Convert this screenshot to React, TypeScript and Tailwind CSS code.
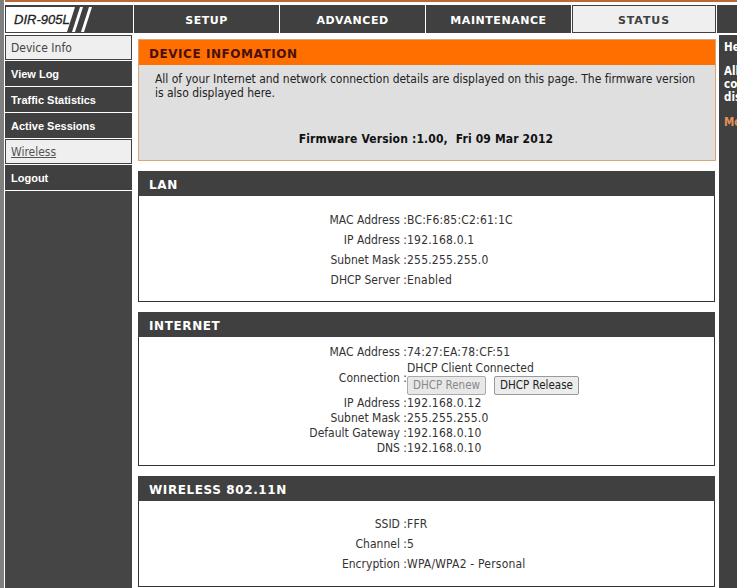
const bodyFont = "font-['DejaVu_Sans_Condensed','DejaVu_Sans',sans-serif]";

const navItems = ["SETUP", "ADVANCED", "MAINTENANCE"];

const sideItems = [
  { label: "Device Info", kind: "light" },
  { label: "View Log", kind: "dark" },
  { label: "Traffic Statistics", kind: "dark" },
  { label: "Active Sessions", kind: "dark" },
  { label: "Wireless", kind: "current" },
  { label: "Logout", kind: "dark" },
];

function Logo() {
  return (
    <div className="relative w-[128px] h-full shrink-0 overflow-hidden bg-[#404040]">
      <svg width="128" height="28" viewBox="0 0 128 28" className="block">
        <polygon points="1,2 70,2 62,27 1,27" fill="#ffffff" />
        <polygon points="75,2 78,2 70,27 67,27" fill="#ffffff" />
        <polygon points="84,2 87,2 79,27 76,27" fill="#ffffff" />
      </svg>
      <span className="absolute left-[9px] top-[6px] font-['Liberation_Sans',sans-serif] italic text-[13px] leading-[17px] [-webkit-text-stroke:0.3px_#222] text-[#222]">
        DIR-905L
      </span>
    </div>
  );
}

function Row({ label, children }: { label: string; children: React.ReactNode }) {
  return (
    <div className="flex items-center">
      <div className="w-[268px] text-right shrink-0 whitespace-nowrap">{label} :</div>
      <div className="whitespace-nowrap tracking-[0.2px]">{children}</div>
    </div>
  );
}

function Section({ title, className, children }: { title: string; className: string; children: React.ReactNode }) {
  return (
    <section className={`flex flex-col w-[577px] shrink-0 border-x border-b border-[#333] ${className}`}>
      <h2 className="h-[25px] -mx-px shrink-0 bg-[#404040] pl-[11px] font-['DejaVu_Sans',sans-serif] font-bold text-[12px] leading-[29px] tracking-[0.6px] text-white">
        {title}
      </h2>
      {children}
    </section>
  );
}

export default function App() {
  return (
    <div className={`h-[588px] w-[737px] overflow-hidden bg-white flex text-[12px] text-[#333] ${bodyFont}`}>
      <div className="w-1 shrink-0 bg-[#808080]" />
      <div className="ml-px flex-1 min-w-0 flex flex-col">
        <div className="h-[2px] shrink-0 bg-[#b9683a]" />

        {/* top nav */}
        <div className="mt-[3px] h-[28px] shrink-0 flex bg-[#404040]">
          <Logo />
          <div className="w-px bg-white" />
          {navItems.map((label) => (
            <div key={label} className="flex">
              <div className="w-[145px] text-center font-['DejaVu_Sans',sans-serif] font-bold text-[11px] leading-[31px] tracking-[0.55px] text-white">
                {label}
              </div>
              <div className="w-px bg-white" />
            </div>
          ))}
          <div className="w-[144px] border border-[#404040] bg-[#efefef] text-center font-['DejaVu_Sans',sans-serif] font-bold text-[11px] leading-[29px] tracking-[0.9px] text-[#404040]">
            STATUS
          </div>
          <div className="w-px bg-white" />
        </div>

        <div className="mt-[2px] flex-1 min-h-0 flex">
          {/* side menu */}
          <nav className="w-[127px] shrink-0 flex flex-col gap-px bg-white">
            {sideItems.map((item) => (
              <div
                key={item.label}
                className={
                  item.kind === "dark"
                    ? "h-[25px] bg-[#404040] pl-[6px] leading-[26px] font-['Liberation_Sans',sans-serif] font-bold text-[11px] text-white"
                    : item.kind === "current"
                      ? "h-[25px] bg-[#efefef] border border-[#404040] pl-[5px] leading-[25px] text-[#555] underline"
                      : "h-[25px] bg-[#efefef] border border-[#404040] pl-[5px] leading-[25px] text-[#444]"
                }
              >
                {item.label}
              </div>
            ))}
            <div className="flex-1 bg-[#454545]" />
          </nav>

          {/* content */}
          <main className="ml-[6px] w-[578px] shrink-0 flex flex-col pt-1">
            <section className="h-[122px] w-[578px] shrink-0 border border-[#d6a77f] bg-[#dfdfdf] flex flex-col">
              <h1 className="h-[25px] shrink-0 bg-[#ff6f00] pl-[10px] font-['DejaVu_Sans',sans-serif] font-bold text-[12px] leading-[28px] tracking-[0.55px] text-[#4a0f0a]">
                DEVICE INFOMATION
              </h1>
              <p className="mt-[7px] ml-4 mr-4 leading-[14px] tracking-[-0.02px] text-[#222]">
                All of your Internet and network connection details are displayed on this page. The firmware version is also displayed here.
              </p>
              <p className="mt-[31px] pr-[2px] text-center font-bold text-[12px] leading-[16px] tracking-[0.15px] text-[#111]">
                Firmware Version :1.00,&nbsp; Fri 09 Mar 2012
              </p>
            </section>

            <Section title="LAN" className="mt-[10px] h-[131px]">
              <div className="pt-[15px] flex flex-col gap-0">
                <div className="h-5"><Row label="MAC Address">BC:F6:85:C2:61:1C</Row></div>
                <div className="h-5"><Row label="IP Address">192.168.0.1</Row></div>
                <div className="h-5"><Row label="Subnet Mask">255.255.255.0</Row></div>
                <div className="h-5"><Row label="DHCP Server">Enabled</Row></div>
              </div>
            </Section>

            <Section title="INTERNET" className="mt-[10px] h-[154px]">
              <div className="pt-[8px] flex flex-col leading-[15px]">
                <Row label="MAC Address">74:27:EA:78:CF:51</Row>
                <div className="flex items-center mt-px">
                  <div className="w-[268px] text-right shrink-0">Connection :</div>
                  <div className="flex flex-col">
                    <div className="leading-[14px]">DHCP Client Connected</div>
                    <div className="flex gap-[8px] mt-px">
                      <button className="h-[19px] w-[79px] rounded-[2px] border border-[#aaa] bg-[#e8e8e8] text-[11.5px] leading-[17px] text-[#888]">DHCP Renew</button>
                      <button className="h-[19px] w-[85px] rounded-[2px] border border-[#999] bg-[#ececec] text-[11.5px] leading-[17px] text-[#222]">DHCP Release</button>
                    </div>
                  </div>
                </div>
                <div className="mt-px"><Row label="IP Address">192.168.0.12</Row></div>
                <Row label="Subnet Mask">255.255.255.0</Row>
                <Row label="Default Gateway">192.168.0.10</Row>
                <Row label="DNS">192.168.0.10</Row>
              </div>
            </Section>

            <Section title="WIRELESS 802.11N" className="mt-[10px] h-[111px]">
              <div className="pt-[14px] flex flex-col">
                <div className="h-5"><Row label="SSID">FFR</Row></div>
                <div className="h-5"><Row label="Channel">5</Row></div>
                <div className="h-5"><Row label="Encryption">WPA/WPA2 - Personal</Row></div>
              </div>
            </Section>
          </main>

          {/* hints column, cut off by the window */}
          <aside className="ml-[3px] flex-1 min-w-0 overflow-hidden bg-[#404040] pl-[5px] pt-[5px] text-white font-bold text-[11.5px]">
            <div className="w-[200px] whitespace-nowrap">
              <div className="leading-[14px]">Helpful Hints..</div>
              <div className="mt-[11px] leading-[13px]">
                All of your Internet<br />connection details<br />displayed on this page.
              </div>
              <div className="mt-[11px] leading-[14px] text-[#e8905a]">More...</div>
            </div>
          </aside>
        </div>
      </div>
    </div>
  );
}
